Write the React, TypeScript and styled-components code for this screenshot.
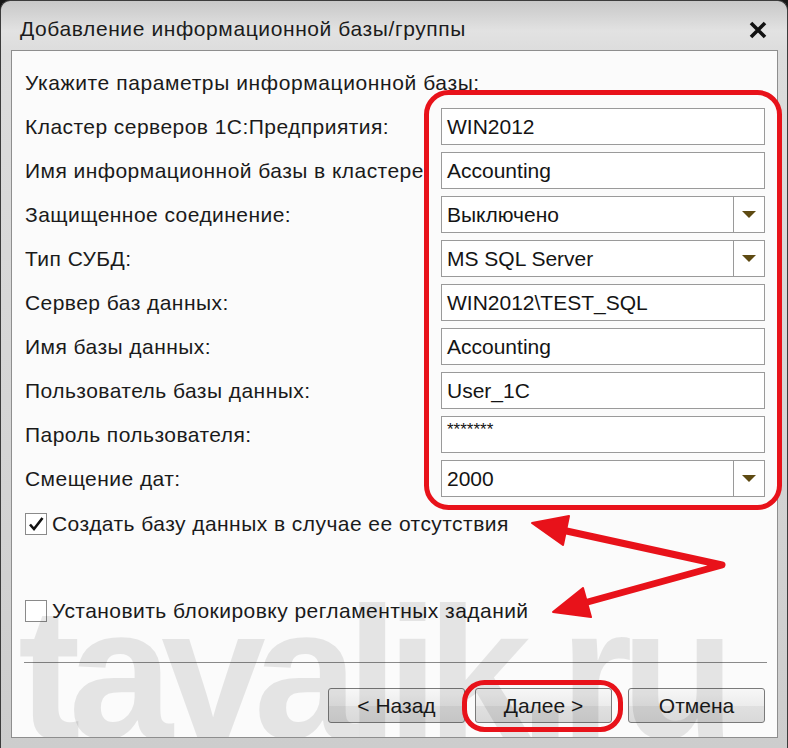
import React from 'react';
import styled, {createGlobalStyle} from 'styled-components';

const GlobalStyle = createGlobalStyle`
    html, body {
        margin: 0;
        padding: 0;
        background: #161616;
    }
    body {
        font-family: "Liberation Sans", Arial, sans-serif;
    }
`;

type Field = {
    label: string;
    value: string;
    select?: boolean;
    secret?: boolean;
};

const fields: Field[] = [
    {label: 'Кластер серверов 1С:Предприятия:', value: 'WIN2012'},
    {label: 'Имя информационной базы в кластере:', value: 'Accounting'},
    {label: 'Защищенное соединение:', value: 'Выключено', select: true},
    {label: 'Тип СУБД:', value: 'MS SQL Server', select: true},
    {label: 'Сервер баз данных:', value: 'WIN2012\\TEST_SQL'},
    {label: 'Имя базы данных:', value: 'Accounting'},
    {label: 'Пользователь базы данных:', value: 'User_1C'},
    {label: 'Пароль пользователя:', value: '*******', secret: true},
    {label: 'Смещение дат:', value: '2000', select: true},
];

const App: React.FC = () => {
    return (
        <>
            <GlobalStyle />
            <Window>
                <TitleBar>
                    <Title>Добавление информационной базы/группы</Title>
                    <CloseIcon viewBox="0 0 20 20">
                        <path d="M3 3 L17 17 M17 3 L3 17" />
                    </CloseIcon>
                </TitleBar>
                <Client>
                    <Heading>Укажите параметры информационной базы:</Heading>
                    <Form>
                        {fields.map((f) => (
                            <React.Fragment key={f.label}>
                                <Label>{f.label}</Label>
                                <Input>
                                    <InputText $secret={f.secret}>{f.value}</InputText>
                                    {f.select && (
                                        <DropButton>
                                            <svg width="16" height="9" viewBox="0 0 16 9">
                                                <path d="M1 1 H15 L8 8 Z" fill="#5e4a12" />
                                            </svg>
                                        </DropButton>
                                    )}
                                </Input>
                            </React.Fragment>
                        ))}
                    </Form>
                    <CheckRow $gap={15}>
                        <CheckBox>
                            <svg width="18" height="18" viewBox="0 0 18 18">
                                <path d="M3 9.5 L7 14 L15.5 3" fill="none" stroke="#111" strokeWidth="2.6" />
                            </svg>
                        </CheckBox>
                        <CheckLabel>Создать базу данных в случае ее отсутствия</CheckLabel>
                    </CheckRow>
                    <CheckRow $gap={63}>
                        <CheckBox />
                        <CheckLabel>Установить блокировку регламентных заданий</CheckLabel>
                    </CheckRow>
                    <Footer>
                        <Separator />
                        <Buttons>
                            <Button>&lt; Назад</Button>
                            <Button>Далее &gt;</Button>
                            <Button $space={16}>Отмена</Button>
                        </Buttons>
                    </Footer>
                    <Watermark>tavalik.ru</Watermark>
                </Client>
                <Annotations viewBox="0 0 788 748" width="788" height="748">
                    <rect x="426.5" y="92.5" width="353" height="415" rx="22" />
                    <rect x="464.5" y="682.5" width="156" height="47" rx="20" />
                    <polyline points="562,530 722,565 584,603" />
                    <polygon points="532,523 569,516 563,545" />
                    <polygon points="553,612 591,617 583,588" />
                </Annotations>
            </Window>
        </>
    );
}

const Window = styled.div`
    position: relative;
    width: 788px;
    height: 748px;
    box-sizing: border-box;
    display: flex;
    flex-direction: column;
    padding: 0 9px 10px 10px;
    border-radius: 10px 10px 0 0;
    border: 1px solid #3c3c3c;
    border-bottom: none;
    background: linear-gradient(180deg, #c8c8c8 0%, #e2e2e2 4%, #dcdcdc 7%, #d4d4d4 60%, #cdcdcd 100%);
    overflow: hidden;
`;

const TitleBar = styled.div`
    height: 49px;
    display: flex;
    align-items: center;
    justify-content: space-between;
    padding: 6px 10px 0 9px;
    box-sizing: border-box;
`;

const Title = styled.div`
    font-size: 21px;
    color: #1c1c1c;
    letter-spacing: 0.6px;
`;

const CloseIcon = styled.svg`
    width: 20px;
    height: 20px;
    margin-top: 2px;
    stroke: #111;
    stroke-width: 3.6;
    fill: none;
`;

const Client = styled.div`
    position: relative;
    flex: 1;
    display: flex;
    flex-direction: column;
    background: #fbfbfb;
    border: 1px solid #8e8e8e;
    padding: 20px 12px 14px 13px;
    overflow: hidden;
`;

const Heading = styled.div`
    font-size: 21px;
    line-height: 24px;
    letter-spacing: 0.6px;
    color: #1a1a1a;
`;

const Form = styled.div`
    margin-top: 13px;
    display: grid;
    grid-template-columns: 1fr 324px;
    grid-auto-rows: 37px;
    column-gap: 4px;
    row-gap: 7px;
`;

const Label = styled.div`
    display: flex;
    align-items: center;
    font-size: 21px;
    letter-spacing: 0.45px;
    color: #1a1a1a;
    white-space: nowrap;
    overflow: hidden;
`;

const Input = styled.div`
    display: flex;
    background: #fff;
    border: 1px solid #9a9a9a;
    box-sizing: border-box;
`;

const InputText = styled.div<{$secret?: boolean}>`
    flex: 1;
    display: flex;
    align-items: ${p => p.$secret ? 'flex-start' : 'center'};
    padding: ${p => p.$secret ? '3px 0 0 5px' : '0 0 0 5px'};
    font-size: ${p => p.$secret ? '17px' : '21px'};
    color: #141414;
    white-space: nowrap;
`;

const DropButton = styled.div`
    width: 30px;
    border-left: 1px solid #9a9a9a;
    display: flex;
    align-items: center;
    justify-content: center;
`;

const CheckRow = styled.div<{$gap: number}>`
    margin-top: ${p => p.$gap}px;
    display: flex;
    align-items: center;
    gap: 5px;
    height: 24px;
`;

const CheckBox = styled.div`
    width: 22px;
    height: 22px;
    box-sizing: border-box;
    border: 1px solid #8a8a8a;
    background: #fff;
    display: flex;
    align-items: center;
    justify-content: center;
`;

const CheckLabel = styled.div`
    font-size: 21px;
    letter-spacing: 0.45px;
    color: #1a1a1a;
`;

const Footer = styled.div`
    margin-top: auto;
    display: flex;
    flex-direction: column;
`;

const Separator = styled.div`
    height: 1px;
    background: #8a8a8a;
    margin: 0 -2px 0 -1px;
`;

const Buttons = styled.div`
    margin-top: 25px;
    display: flex;
    justify-content: flex-end;
    gap: 10px;
`;

const Button = styled.div<{$space?: number}>`
    width: 137px;
    height: 35px;
    box-sizing: border-box;
    margin-left: ${p => p.$space ? p.$space - 10 : 0}px;
    display: flex;
    align-items: center;
    justify-content: center;
    font-size: 21px;
    color: #1a1a1a;
    border: 1px solid #7a7a7a;
    border-radius: 3px;
    background: linear-gradient(180deg, #f7f7f7 0%, #ececec 50%, #e0e0e0 52%, #d9d9d9 100%);
`;

const Watermark = styled.div`
    position: absolute;
    left: 6px;
    bottom: -30px;
    font-family: "Liberation Sans", Arial, sans-serif;
    font-weight: bold;
    font-size: 188px;
    letter-spacing: -12px;
    line-height: 1;
    color: rgba(0, 0, 0, 0.09);
    pointer-events: none;
    white-space: nowrap;
`;

const Annotations = styled.svg`
    position: absolute;
    left: -1px;
    top: -1px;
    pointer-events: none;
    fill: none;
    stroke: #e8121a;
    stroke-width: 5;

    polyline {
        stroke-width: 7;
        stroke-linejoin: round;
    }
    polygon {
        fill: #e8121a;
        stroke-width: 2;
        stroke-linejoin: round;
    }
`;

export default App;
